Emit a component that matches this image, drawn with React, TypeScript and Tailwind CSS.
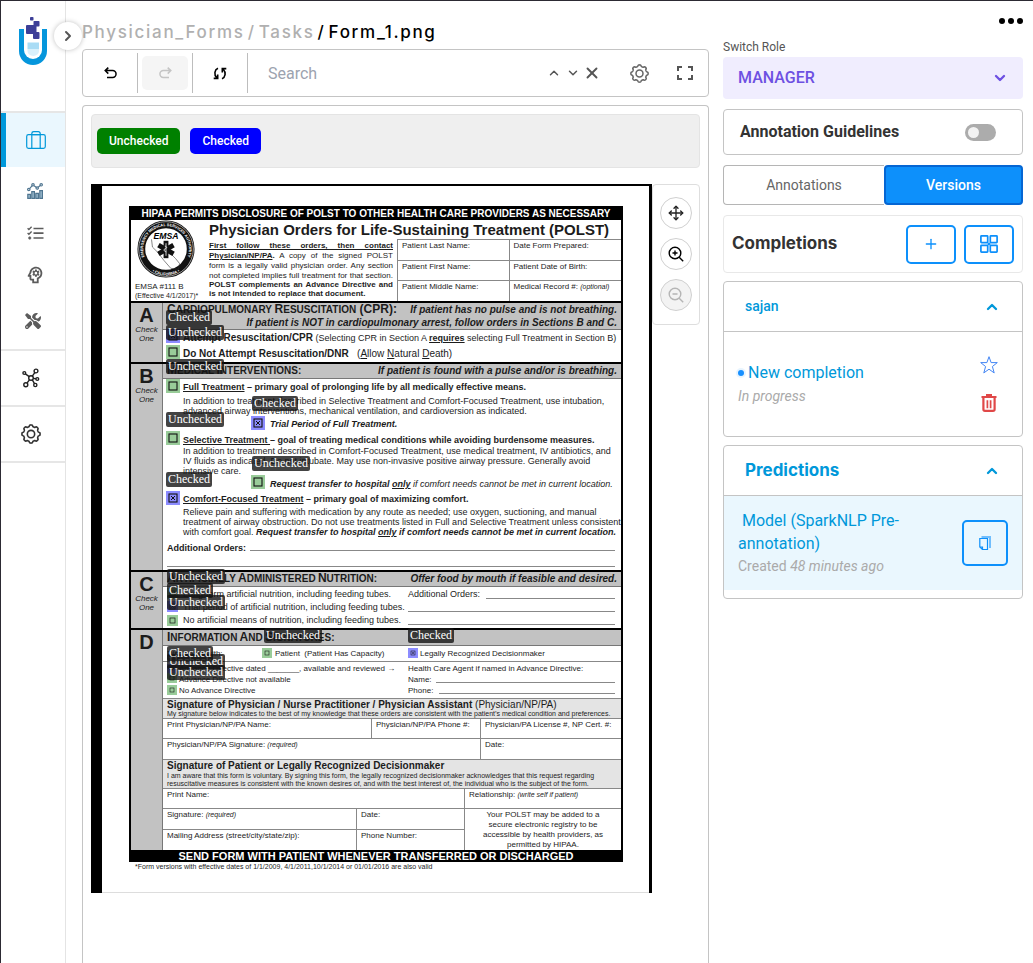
import type { ReactNode } from "react";
import { FaTools } from "react-icons/fa";
import { MdOutlinePsychology } from "react-icons/md";
import { ChevronDown, ChevronRight, ChevronUp, Move, Plus, X } from "lucide-react";

type Kind = "Checked" | "Unchecked";

/* ---------- icons ---------- */

function gearPath(teeth: number, outer: number, inner: number) {
  const points: string[] = [];
  const steps = teeth * 16;
  for (let i = 0; i < steps; i++) {
    const a = (i / steps) * Math.PI * 2;
    const wave = Math.tanh(2.2 * Math.cos(a * teeth)) / Math.tanh(2.2);
    const r = (outer + inner) / 2 + ((outer - inner) / 2) * wave;
    points.push(`${(12 + r * Math.sin(a)).toFixed(2)} ${(12 - r * Math.cos(a)).toFixed(2)}`);
  }
  return `M${points.join("L")}Z`;
}

function Gear({ className }: { className: string }) {
  return (
    <svg viewBox="0 0 24 24" className={className} fill="none" stroke="currentColor" strokeWidth="1.9" aria-hidden="true">
      <path d={gearPath(8, 10.9, 9)} />
      <circle cx="12" cy="12" r="4.4" />
    </svg>
  );
}

function Logo() {
  return (
    <svg viewBox="0 0 28 50" className="h-[50px] w-7" role="img" aria-label="Home">
      <path d="M0 13h5v17a9 9 0 0 0 18 0V13h5v22a14 14 0 0 1-28 0z" fill="#0596dc" />
      <path d="M5 25h18v9a9 9 0 0 1-18 0z" fill="#fff" />
      <path d="M8.500 26.500h11.500v6.500h-11.500z" fill="#a9dcf5" />
      <path d="M8.500 33h11.500v2a5.700 5 0 0 1-11.500 0z" fill="#d9f1fc" />
      <g fill="#3d3f98">
        <rect x="11" y="1" width="3.500" height="3.500" rx=".8" />
        <rect x="14.500" y="5" width="6" height="5.500" rx=".8" />
        <rect x="7" y="9" width="10.500" height="9" rx="1" />
        <rect x="14" y="16" width="6.500" height="7" rx="1" />
      </g>
    </svg>
  );
}

function SuitcaseIcon() {
  return (
    <svg viewBox="0 0 20 18" className="h-[18px] w-5" fill="none" stroke="currentColor" strokeWidth="1.2" aria-hidden="true">
      <rect x=".7" y="3.700" width="18.600" height="13.600" rx="1.800" />
      <path d="M5.800 17V2.500A1.800 1.800 0 0 1 7.600.7h4.800a1.800 1.800 0 0 1 1.800 1.800V17M5.800 3.700h8.400" />
    </svg>
  );
}

function ChartIcon() {
  return (
    <svg viewBox="0 0 16 16" className="size-4" fill="none" stroke="currentColor" strokeWidth="1.200" aria-hidden="true">
      <path d="M.8 15.400v-4h2.600v4zM4.800 15.400V8.600h2.600v6.800zM8.800 15.400v-5h2.600v5zM12.800 15.400V7.600h2.600v7.800z" fill="#9dbcd0" />
      <circle cx="1.800" cy="6.500" r="1.200" />
      <circle cx="6" cy="1.800" r="1.200" />
      <circle cx="10.200" cy="5" r="1.200" />
      <circle cx="14.200" cy="1.800" r="1.200" />
      <path d="m2.600 5.600 2.600-2.900m1.800 0 2.300 1.600m1.800-.1 2.200-1.600" />
    </svg>
  );
}

function ChecklistIcon() {
  return (
    <svg viewBox="0 0 17 14" className="h-3.5 w-[17px]" fill="none" stroke="currentColor" strokeWidth="1.700" aria-hidden="true">
      <path d="M6.500 2.500H16.500M6.500 7.200H16.500M6.500 12H16.500" />
      <path d="m.6 2.200 1.300 1.300L4.600.7M.6 7l1.300 1.300 2.700-2.800" strokeWidth="1.300" />
      <path d="M1.200 12h3M2.700 10.500v3" strokeWidth="1.600" />
    </svg>
  );
}

function NetworkIcon() {
  return (
    <svg viewBox="0 0 18 20" className="h-5 w-[18px]" fill="none" stroke="currentColor" strokeWidth="1.400" aria-hidden="true">
      <circle cx="9" cy="10" r="2.300" />
      <circle cx="2.300" cy="5" r="1.400" />
      <circle cx="14" cy="3" r="1.900" />
      <circle cx="15.300" cy="11" r="1.400" />
      <circle cx="3.800" cy="16.800" r="2" />
      <circle cx="13.300" cy="17" r="1.600" />
      <path d="M3.400 5.900 7.200 8.600M12.800 4.600l-2.500 3.500M11.300 10.400l2.600.4M5 15.200l2.400-3.400M12.500 15.600l-2.200-3.700" />
    </svg>
  );
}

function UndoIcon({ flipped = false }: { flipped?: boolean }) {
  return (
    <svg viewBox="0 0 13 12" className={flipped ? "h-3 w-[13px] -scale-x-100" : "h-3 w-[13px]"} fill="none" stroke="currentColor" strokeWidth="1.500" aria-hidden="true">
      <path d="M4.300.6 1.200 3.600l3.100 3M1.400 3.600h7.200a3.400 3.400 0 0 1 0 6.900H3" />
    </svg>
  );
}

function ResetIcon() {
  return (
    <svg viewBox="0 0 14 13" className="h-[13px] w-3.5" fill="none" stroke="currentColor" strokeWidth="1.600" aria-hidden="true">
      <path d="M5 1.200C1.600 2.600.6 7.500 3.800 10.800M.7 11.400h4V7.600M9 11.800c3.400-1.400 4.400-6.300 1.200-9.600M13.300 1.600h-4v3.800" />
    </svg>
  );
}

function FullscreenIcon() {
  return (
    <svg viewBox="0 0 16 14" className="h-3.5 w-4" fill="none" stroke="currentColor" strokeWidth="2" aria-hidden="true">
      <path d="M1 5V1h4M11 1h4v4M15 9v4h-4M5 13H1V9" />
    </svg>
  );
}

function ZoomIcon({ plus = false }: { plus?: boolean }) {
  return (
    <svg viewBox="0 0 16 16" className="size-4" fill="none" stroke="currentColor" strokeWidth="1.400" aria-hidden="true">
      <circle cx="7" cy="7" r="5.800" />
      <path d="m11.200 11.200 4 4M4.500 7h5" />
      {plus && <path d="M7 4.500v5" />}
    </svg>
  );
}

function GridIcon() {
  return (
    <svg viewBox="0 0 18 18" className="size-[18px]" fill="none" stroke="currentColor" strokeWidth="1.700" aria-hidden="true">
      <rect x=".9" y=".9" width="6.800" height="6.800" rx=".6" />
      <rect x="10.300" y=".9" width="6.800" height="6.800" rx=".6" />
      <rect x=".9" y="10.300" width="6.800" height="6.800" rx=".6" />
      <rect x="10.300" y="10.300" width="6.800" height="6.800" rx=".6" />
      <path d="m7.300 7.300 3.400 3.400m0-3.400-3.400 3.400" strokeWidth="1.200" />
    </svg>
  );
}

function StarIcon() {
  return (
    <svg viewBox="0 0 18 18" className="size-[18px]" fill="none" stroke="currentColor" strokeWidth="1" strokeLinejoin="round" aria-hidden="true">
      <path d="m9 .7 2.100 5.900h6.200l-4.900 3.900 1.800 6.400L9 13.200l-5.200 3.700 1.800-6.400L.7 6.600h6.200z" />
    </svg>
  );
}

function TrashIcon() {
  return (
    <svg viewBox="0 0 16 18" className="h-[18px] w-4" fill="none" stroke="currentColor" aria-hidden="true">
      <path d="M.5 3h15M5 1.200h6" strokeWidth="2.200" />
      <path d="M2.400 3.500v11.800a1.600 1.600 0 0 0 1.600 1.600h8a1.600 1.600 0 0 0 1.600-1.600V3.500" strokeWidth="2.200" />
      <path d="M6.400 6.200v8M9.600 6.200v8" strokeWidth="1.700" />
    </svg>
  );
}

function PagesIcon() {
  return (
    <svg viewBox="0 0 12 14" className="h-3.5 w-3" fill="none" stroke="currentColor" aria-hidden="true">
      <path d="M2.500 1h8.500v11" strokeWidth="2" strokeOpacity=".55" />
      <path d="M.8 2.500h7.700v11H3.500L.8 11zM.8 11h2.700v2.500" strokeWidth="1.200" />
    </svg>
  );
}

/* ---------- scanned form ---------- */

function Seal() {
  return (
    <svg viewBox="0 0 60 60" className="ml-0.5 size-[58px] overflow-visible" role="img" aria-label="EMSA seal">
      <defs>
        <path id="seal-top" d="M11.800 45.200A23.700 23.700 0 1 1 48.200 45.200" />
        <path id="seal-bottom" d="M6.400 43.600A27.200 27.200 0 0 0 53.600 43.600" />
      </defs>
      <circle cx="30" cy="30" r="25.500" fill="#fff" stroke="#111" strokeWidth="8" />
      <circle cx="30" cy="30" r="28.300" fill="none" stroke="#ddd" strokeWidth=".7" />
      <path d="M15 20l1 8 5 5 7 9 7 8 8 1 1-6-4-5-11-11v-7" fill="none" stroke="#333" strokeWidth=".6" />
      <g className="fill-white font-['Liberation_Sans'] text-[4px] font-bold">
        <text><textPath href="#seal-top" startOffset="50%" textAnchor="middle">EMERGENCY MEDICAL SERVICES AUTHORITY</textPath></text>
        <text><textPath href="#seal-bottom" startOffset="50%" textAnchor="middle">• CALIFORNIA •</textPath></text>
      </g>
      <text x="30" y="20" textAnchor="middle" className="fill-black font-['Liberation_Sans'] text-[9px] font-bold italic">EMSA</text>
      <g fill="#111">
        <rect x="27.500" y="21.500" width="5" height="18" />
        <rect x="27.500" y="21.500" width="5" height="18" transform="rotate(60 30 30.500)" />
        <rect x="27.500" y="21.500" width="5" height="18" transform="rotate(120 30 30.500)" />
      </g>
      <path d="M30 24v13M28.800 27c2.500.5 2.500 2 0 3s0 2.500 1.500 3" stroke="#fff" strokeWidth=".8" fill="none" />
    </svg>
  );
}

function Caps({ words, tail = "" }: { words: string[]; tail?: string }) {
  return (
    <span className="font-bold">
      {words.map((word, i) => (
        <span key={word}>
          {i > 0 && " "}
          <span className="text-[12px]">{word[0]}</span>
          <span className="text-[10px]">{word.slice(1)}</span>
        </span>
      ))}
      <span className="text-[12px]">{tail}</span>
    </span>
  );
}

function Section({ letter, check = false, children }: { letter: string; check?: boolean; children: ReactNode }) {
  return (
    <section className="flex border-t-2 border-black">
      <div className="w-8 shrink-0 border-r border-[#777] bg-[#c2c2c2] text-center">
        <div className="pt-0.5 text-[20px] leading-5 font-bold">{letter}</div>
        {check && <div className="text-[8px] leading-[9px] italic">Check<br />One</div>}
      </div>
      <div className="min-w-0 flex-1">{children}</div>
    </section>
  );
}

const bar = "flex items-center justify-between border-b border-[#777] bg-[#c2c2c2] px-1";
const field = "border-[#888] px-1 pt-px";

function Rule() {
  return <span className="mb-0.5 flex-1 self-end border-b border-[#888]" />;
}

function PolstForm() {
  return (
    <div className="w-[494px] font-['Liberation_Sans',Arial,sans-serif] text-[8px] leading-[10px] whitespace-nowrap text-[#1c1c1c]">
      <div className="border-x-2 border-black">
        <div className="h-[14px] bg-black text-center text-[10px] leading-[15px] font-bold text-white">
          HIPAA PERMITS DISCLOSURE OF POLST TO OTHER HEALTH CARE PROVIDERS AS NECESSARY
        </div>
        <div className="flex h-[81px]">
          <div className="flex w-[78px] shrink-0 flex-col pl-1">
            <Seal />
            <div className="mt-1 leading-[10px]">EMSA #111 B</div>
            <div className="text-[7px] leading-[7px]">(Effective 4/1/2017)*</div>
          </div>
          <div className="flex min-w-0 flex-1 flex-col">
            <h2 className="h-[19px] text-[15px] leading-5 font-bold">Physician Orders for Life-Sustaining Treatment (POLST)</h2>
            <div className="flex flex-1">
              <div className="w-[188px] shrink-0 pt-0.5 pr-1">
                <div className="font-bold underline [text-align-last:justify]">First follow these orders, then contact</div>
                <div className="[text-align-last:justify]"><b className="underline">Physician/NP/PA</b><b>.</b> A copy of the signed POLST</div>
                <div className="[text-align-last:justify]">form is a legally valid physician order. Any section</div>
                <div className="leading-[9px] [text-align-last:justify]">not completed implies full treatment for that section.</div>
                <div className="leading-[9px] font-bold [text-align-last:justify]">POLST complements an Advance Directive and</div>
                <div className="leading-[9px] font-bold">is not intended to replace that document.</div>
              </div>
              <div className="grid flex-1 grid-cols-2 grid-rows-3 border-l border-[#888]">
                {["Patient Last Name:", "Date Form Prepared:", "Patient First Name:", "Patient Date of Birth:", "Patient Middle Name:"].map((name) => (
                  <div key={name} className="border-t border-[#888] px-1 pt-px odd:border-r">{name}</div>
                ))}
                <div className="border-t border-[#888] px-1 pt-px">Medical Record #: <i className="text-[7px]">(optional)</i></div>
              </div>
            </div>
          </div>
        </div>

        <Section letter="A" check>
          <div className="h-[27px] border-b border-[#777] bg-[#c2c2c2] px-1 text-right text-[10px] leading-[13px] font-bold italic">
            <div className="flex items-baseline justify-between">
              <span className="not-italic"><Caps words={["CARDIOPULMONARY", "RESUSCITATION"]} tail=" (CPR):" /></span>
              <span>If patient has no pulse and is not breathing.</span>
            </div>
            <div>If patient is NOT in cardiopulmonary arrest, follow orders in Sections B and C.</div>
          </div>
          <div className="h-8 pl-5 text-[9px] leading-[16px]">
            <div><b className="text-[10px]">Attempt Resuscitation/CPR</b> (Selecting CPR in Section A <b className="underline">requires</b> selecting Full Treatment in Section B)</div>
            <div className="text-[10px]"><b>Do Not Attempt Resuscitation/DNR</b> &nbsp; (<u>A</u>llow <u>N</u>atural <u>D</u>eath)</div>
          </div>
        </Section>

        <Section letter="B" check>
          <div className={`${bar} h-[15px]`}>
            <Caps words={["MEDICAL", "INTERVENTIONS:"]} />
            <b className="text-[10px] italic">If patient is found with a pulse and/or is breathing.</b>
          </div>
          <div className="h-[191px] pl-5 text-[9px]">
            <div className="pt-px leading-[14px] font-bold"><u>Full Treatment</u> – primary goal of prolonging life by all medically effective means.</div>
            <div className="pt-0.5">In addition to treatment described in Selective Treatment and Comfort-Focused Treatment, use intubation,<br />advanced airway interventions, mechanical ventilation, and cardioversion as indicated.</div>
            <div className="pl-[87px] leading-[16px] font-bold italic">Trial Period of Full Treatment.</div>
            <div className="pt-[3px] font-bold"><u>Selective Treatment </u>– goal of treating medical conditions while avoiding burdensome measures.</div>
            <div className="pt-px">In addition to treatment described in Comfort-Focused Treatment, use medical treatment, IV antibiotics, and<br />IV fluids as indicated. Do not intubate. May use non-invasive positive airway pressure. Generally avoid<br />intensive care.</div>
            <div className="pl-[87px] leading-[16px] italic"><b>Request transfer to hospital <u>only</u></b> if comfort needs cannot be met in current location.</div>
            <div className="leading-[15px] font-bold"><u>Comfort-Focused Treatment</u> – primary goal of maximizing comfort.</div>
            <div>Relieve pain and suffering with medication by any route as needed; use oxygen, suctioning, and manual<br />treatment of airway obstruction. Do not use treatments listed in Full and Selective Treatment unless consistent<br />with comfort goal. <b className="italic">Request transfer to hospital <u>only</u> if comfort needs cannot be met in current location.</b></div>
            <div className="-ml-4 mr-1.5">
              <div className="flex gap-1 pt-1.5"><b>Additional Orders:</b><Rule /></div>
              <div className="flex h-4"><Rule /></div>
            </div>
          </div>
        </Section>

        <Section letter="C" check>
          <div className={`${bar} h-[15px]`}>
            <Caps words={["ARTIFICIALLY", "ADMINISTERED", "NUTRITION:"]} />
            <b className="text-[10px] italic">Offer food by mouth if feasible and desired.</b>
          </div>
          <div className="flex h-[41px] pt-px pr-1.5 pl-5 text-[9px] leading-[13px]">
            <div className="w-[225px] shrink-0">
              <div>Long-term artificial nutrition, including feeding tubes.</div>
              <div>Trial period of artificial nutrition, including feeding tubes.</div>
              <div>No artificial means of nutrition, including feeding tubes.</div>
            </div>
            <div className="flex-1">
              <div className="flex gap-1.5">Additional Orders:<Rule /></div>
              <div className="flex h-[13px]"><Rule /></div>
              <div className="flex h-[13px]"><Rule /></div>
            </div>
          </div>
        </Section>

        <Section letter="D">
          <div className={`${bar} h-4`}>
            <Caps words={["INFORMATION", "AND", "SIGNATURES:"]} />
          </div>
          <div className="flex h-4 border-b border-[#888] pl-1 leading-[16px]">
            <span className="w-[108px]">Discussed with:</span>
            <span className="w-[145px]">Patient &nbsp;(Patient Has Capacity)</span>
            <span>Legally Recognized Decisionmaker</span>
          </div>
          <div className="flex h-9 pt-px pr-1.5 pl-4 leading-[11px]">
            <div className="w-[229px] shrink-0">
              <div>Advance Directive dated _______, available and reviewed →</div>
              <div>Advance Directive not available</div>
              <div>No Advance Directive</div>
            </div>
            <div className="flex-1">
              <div>Health Care Agent if named in Advance Directive:</div>
              <div className="flex gap-1">Name:<Rule /></div>
              <div className="flex gap-1.5">Phone:<Rule /></div>
            </div>
          </div>
          <div className="h-[21px] border-y border-[#888] bg-[#e4e4e4] px-1">
            <div className="text-[10px] leading-[11px]"><b>Signature of Physician / Nurse Practitioner / Physician Assistant</b> (Physician/NP/PA)</div>
            <div className="text-[7px] leading-[8px]">My signature below indicates to the best of my knowledge that these orders are consistent with the patient’s medical condition and preferences.</div>
          </div>
          <div className="flex h-5 border-b border-[#888]">
            <div className={`${field} w-[209px] border-r`}>Print Physician/NP/PA Name:</div>
            <div className={`${field} w-[109px] border-r`}>Physician/NP/PA Phone #:</div>
            <div className={`${field} flex-1`}>Physician/PA License #, NP Cert. #:</div>
          </div>
          <div className="flex h-5">
            <div className={`${field} w-[318px] border-r`}>Physician/NP/PA Signature: <i className="text-[7px]">(required)</i></div>
            <div className={`${field} flex-1`}>Date:</div>
          </div>
          <div className="h-[30px] border-y border-[#888] bg-[#e4e4e4] px-1">
            <div className="text-[10px] leading-[12px] font-bold">Signature of Patient or Legally Recognized Decisionmaker</div>
            <div className="text-[7px] leading-[8px]">I am aware that this form is voluntary. By signing this form, the legally recognized decisionmaker acknowledges that this request regarding<br />resuscitative measures is consistent with the known desires of, and with the best interest of, the individual who is the subject of the form.</div>
          </div>
          <div className="flex h-[61px]">
            <div className="flex w-[302px] flex-col border-r border-[#888]">
              <div className={`${field} h-5 border-b`}>Print Name:</div>
              <div className="grid flex-1 grid-cols-[194px_1fr] grid-rows-2">
                <div className={`${field} border-r border-b`}>Signature: <i className="text-[7px]">(required)</i></div>
                <div className={`${field} border-b`}>Date:</div>
                <div className={`${field} border-r`}>Mailing Address (street/city/state/zip):</div>
                <div className={field}>Phone Number:</div>
              </div>
            </div>
            <div className="flex-1">
              <div className={`${field} h-5 border-b`}>Relationship: <i className="text-[7px]">(write self if patient)</i></div>
              <div className="pt-px text-center">Your POLST may be added to a<br />secure electronic registry to be<br />accessible by health providers, as<br />permitted by HIPAA.</div>
            </div>
          </div>
        </Section>
      </div>
      <div className="h-3 bg-black text-center text-[11px] leading-3 font-bold text-white">SEND FORM WITH PATIENT WHENEVER TRANSFERRED OR DISCHARGED</div>
      <div className="pl-1.5 text-[7px] leading-[9px]">*Form versions with effective dates of 1/1/2009, 4/1/2011,10/1/2014 or 01/01/2016 are also valid</div>
    </div>
  );
}

/* Regions are stored in canvas pixels: box x, y, side, then the label's x, y. */
const regions: { kind: Kind; x: number; y: number; size: number; lx: number; ly: number }[] = [
  { kind: "Checked", x: 75, y: 145, size: 14, lx: 75, ly: 126 },
  { kind: "Unchecked", x: 75, y: 161, size: 14, lx: 75, ly: 141 },
  { kind: "Unchecked", x: 75, y: 195, size: 14, lx: 75, ly: 175 },
  { kind: "Checked", x: 160, y: 232, size: 14, lx: 161, ly: 212 },
  { kind: "Unchecked", x: 75, y: 247, size: 14, lx: 75, ly: 228 },
  { kind: "Unchecked", x: 160, y: 291, size: 14, lx: 161, ly: 272 },
  { kind: "Checked", x: 75, y: 307, size: 14, lx: 75, ly: 288 },
  { kind: "Unchecked", x: 76, y: 404, size: 11, lx: 76, ly: 385 },
  { kind: "Checked", x: 76, y: 417, size: 11, lx: 76, ly: 399 },
  { kind: "Unchecked", x: 76, y: 431, size: 11, lx: 76, ly: 411 },
  { kind: "Unchecked", x: 171, y: 464, size: 10, lx: 173, ly: 444 },
  { kind: "Checked", x: 317, y: 464, size: 10, lx: 317, ly: 444 },
  { kind: "Unchecked", x: 76, y: 489, size: 10, lx: 76, ly: 470 },
  { kind: "Checked", x: 76, y: 480, size: 9, lx: 76, ly: 462 },
  { kind: "Unchecked", x: 76, y: 501, size: 10, lx: 76, ly: 481 },
];

function Regions() {
  return (
    <>
      {regions.map((r) => (
        <span
          key={`box-${r.x}-${r.y}`}
          className={`absolute flex p-[3px] ${r.kind === "Checked" ? "bg-[#0000ff]/45" : "bg-[#008000]/40"}`}
          style={{ left: r.x, top: r.y, width: r.size, height: r.size }}
        >
          <svg viewBox="0 0 8 8" className="size-full overflow-visible" fill="none" stroke="#111" strokeWidth="1.100" aria-hidden="true">
            <rect x="0" y="0" width="8" height="8" />
            {r.kind === "Checked" && <path d="m2 2 4 4m0-4L2 6" strokeWidth="1" />}
          </svg>
        </span>
      ))}
      {regions.map((r) => (
        <span
          key={`label-${r.lx}-${r.ly}`}
          className="absolute rounded-xs bg-[#141414]/80 px-0.5 font-['Liberation_Serif',serif] text-[12px] leading-[15px] text-white"
          style={{ left: r.lx, top: r.ly }}
        >
          {r.kind}
        </span>
      ))}
    </>
  );
}

/* ---------- page parts ---------- */

const navItem = "flex h-[42px] items-center justify-center";

function Sidebar() {
  return (
    <nav aria-label="Main" className="relative w-[65px] shrink-0 border-r border-[#e4e4e4]">
      <div className="flex h-28 justify-center border-b-2 border-[#e6e6e6] pt-[15px]">
        <a href="#home" className="h-[50px]"><Logo /></a>
      </div>
      <button type="button" aria-label="Expand menu" className="absolute top-[21px] left-[53px] z-10 flex size-7 items-center justify-center rounded-full bg-white text-[#555] shadow-[0_0_5px_rgba(0,0,0,0.25)]">
        <ChevronRight className="size-4" strokeWidth={3} />
      </button>
      <a href="#projects" aria-label="Projects" className="flex h-[54px] items-center justify-center border-l-[5px] border-[#0098da] bg-[#eaf7fe] text-[#0098da]"><SuitcaseIcon /></a>
      <div className="border-b-2 border-[#e6e6e6] pt-[3px] pb-1.5 pl-1 text-[#5c5c5c]">
        <a href="#analytics" aria-label="Analytics" className={`${navItem} text-[#4f7590]`}><ChartIcon /></a>
        <a href="#tasks" aria-label="Tasks" className={navItem}><ChecklistIcon /></a>
        <a href="#models" aria-label="Models" className={navItem}><MdOutlinePsychology className="size-[22px]" /></a>
        <a href="#tools" aria-label="Tools" className="flex h-[47px] items-center justify-center pt-0.5 pr-1"><FaTools className="size-4" /></a>
      </div>
      <a href="#hub" aria-label="Hub" className="flex h-14 items-center justify-center border-b-2 border-[#e6e6e6] pr-1 text-[#222]"><NetworkIcon /></a>
      <a href="#settings" aria-label="Settings" className="flex h-14 items-center justify-center border-b-2 border-[#e6e6e6] pr-1 text-[#333]"><Gear className="size-5" /></a>
    </nav>
  );
}

const tool = "flex h-10 w-[55px] shrink-0 items-center justify-center border-r border-[#bdbdbd]";

function Toolbar() {
  return (
    <div className="flex h-12 items-center rounded-[4px] border border-[#c4c4c4]">
      <button type="button" aria-label="Undo" className={`${tool} text-black`}><UndoIcon /></button>
      <div className={tool}>
        <button type="button" disabled aria-label="Redo" className="flex h-[34px] w-[46px] items-center justify-center rounded-[5px] bg-[#f5f5f5] text-[#c4c4c4]"><UndoIcon flipped /></button>
      </div>
      <button type="button" aria-label="Reset" className={`${tool} text-black`}><ResetIcon /></button>
      <input type="text" aria-label="Search" placeholder="Search" className="h-10 min-w-0 flex-1 px-5 text-[16px] outline-none placeholder:text-[#9ca3af]" />
      <div className="flex items-center text-[#555]">
        <button type="button" aria-label="Previous match" className="flex w-[19px] justify-center"><ChevronUp className="size-3.5" strokeWidth={2.5} /></button>
        <button type="button" aria-label="Next match" className="flex w-[19px] justify-center"><ChevronDown className="size-3.5" strokeWidth={2.5} /></button>
        <button type="button" aria-label="Clear search" className="flex w-[19px] justify-center"><X className="size-[18px]" strokeWidth={2.5} /></button>
        <button type="button" aria-label="Display settings" className="ml-7 flex w-5 justify-center text-[#666]"><Gear className="size-[19px]" /></button>
        <button type="button" aria-label="Full screen" className="mr-[15px] ml-7 flex w-4 justify-center"><FullscreenIcon /></button>
      </div>
    </div>
  );
}

const round = "flex size-8 items-center justify-center rounded-full border border-[#d0d0d0]";

function Workspace() {
  return (
    <div className="flex-1 rounded-t-[4px] border border-b-0 border-[#c4c4c4] p-2">
      <div className="flex h-[54px] items-center gap-2.5 rounded-[4px] border border-[#e4e4e4] bg-[#efefef] px-[5px]">
        <button type="button" className="h-[26px] rounded-[5px] bg-[#008000] px-3 text-[12px] font-medium text-white">Unchecked</button>
        <button type="button" className="h-[26px] rounded-[5px] bg-[#0000ff] px-3 text-[12px] font-medium text-white">Checked</button>
      </div>
      <div className="mt-4 flex items-start">
        <div className="relative w-[561px] shrink-0 border-t-2 border-r-[3px] border-l-[11px] border-black bg-white">
          <div className="h-[707px] border-b border-[#ddd] pt-5 pl-[27px]"><PolstForm /></div>
          <div className="absolute -top-0.5 -left-[11px]"><Regions /></div>
        </div>
        <div className="flex h-[141px] flex-1 flex-col items-center gap-[9px] rounded-[4px] border border-[#dedede] pt-3">
          <button type="button" aria-label="Pan" className={`${round} text-[#222]`}><Move className="size-4" strokeWidth={2} /></button>
          <button type="button" aria-label="Zoom in" className={`${round} text-black`}><ZoomIcon plus /></button>
          <button type="button" disabled aria-label="Zoom out" className={`${round} bg-[#f3f3f3] text-[#b5b5b5]`}><ZoomIcon /></button>
        </div>
      </div>
    </div>
  );
}

const outlineButton = "flex h-[39px] w-[50px] items-center justify-center rounded-[5px] border-2 border-[#0d90fb] text-[#0d90fb]";

function SidePanel() {
  return (
    <aside className="w-[300px] shrink-0">
      <div className="flex h-10 items-center justify-end">
        <button type="button" aria-label="More options" className="flex gap-[3px] text-black">
          <span className="size-1.5 rounded-full bg-black" />
          <span className="size-1.5 rounded-full bg-black" />
          <span className="size-1.5 rounded-full bg-black" />
        </button>
      </div>
      <label htmlFor="role" className="block h-4 text-[12px] leading-3 text-[#555]">Switch Role</label>
      <div className="relative">
        <select id="role" className="h-[42px] w-full appearance-none rounded-[4px] bg-[#f0edfe] px-[15px] text-[16px] font-medium text-[#6d50e2] outline-none">
          <option>MANAGER</option>
        </select>
        <ChevronDown className="pointer-events-none absolute top-[13px] right-[15px] size-4 text-[#6d50e2]" strokeWidth={3.5} />
      </div>
      <label className="mt-2.5 flex h-[46px] items-center justify-between rounded-[4px] border border-[#c4c4c4] pr-[26px] pl-4 text-[16px] font-bold text-[#333]">
        Annotation Guidelines
        <input type="checkbox" role="switch" className="h-[17px] w-[31px] appearance-none rounded-full bg-[#acacac] p-[3px] before:block before:size-[11px] before:rounded-full before:bg-[#f3f3f3] checked:before:ml-auto" />
      </label>
      <div className="mt-2.5 flex h-10 text-[14px]">
        <button type="button" className="w-[161px] rounded-l-[4px] border border-r-0 border-[#b5b5b5] text-[#666]">Annotations</button>
        <button type="button" className="flex-1 rounded-[4px] border-2 border-[#0566d3] bg-[#0d90fb] font-medium text-white">Versions</button>
      </div>
      <div className="mt-2.5 flex h-[58px] items-center gap-2 rounded-[4px] border border-[#e8e8e8] px-2">
        <h2 className="flex-1 font-['Inter',sans-serif] text-[17px] font-bold text-[#333]">Completions</h2>
        <button type="button" aria-label="Add completion" className={outlineButton}><Plus className="size-4" strokeWidth={2} /></button>
        <button type="button" aria-label="Compare completions" className={outlineButton}><GridIcon /></button>
      </div>

      <div className="mt-2 rounded-[4px] border border-[#c4c4c4]">
        <button type="button" className="flex h-[50px] w-full items-center justify-between border-b border-[#c4c4c4] pr-[22px] pl-[21px] text-[14px] font-medium text-[#0098da]">
          sajan
          <ChevronUp className="size-4" strokeWidth={3.5} />
        </button>
        <div className="flex h-[104px] items-center justify-between pr-6 pl-3.5">
          <div>
            <div className="flex items-center gap-1 text-[16px] leading-6 text-[#0098da]">
              <span className="size-1.5 rounded-full bg-[#1890ff] ring-2 ring-[#1890ff]/10" />New completion
            </div>
            <div className="text-[14px] leading-[22px] text-[#aaa] italic">In progress</div>
          </div>
          <div className="flex flex-col items-center gap-5">
            <button type="button" aria-label="Mark as ground truth" className="text-[#4285f4]"><StarIcon /></button>
            <button type="button" aria-label="Delete completion" className="text-[#e04848]"><TrashIcon /></button>
          </div>
        </div>
      </div>

      <div className="mt-2 rounded-[4px] border border-[#c4c4c4] pb-2">
        <button type="button" className="flex h-[50px] w-full items-center justify-between border-b border-[#c4c4c4] pr-[22px] pl-[21px] text-[#0098da]">
          <span className="font-['Inter',sans-serif] text-[17px] font-bold">Predictions</span>
          <ChevronUp className="size-4" strokeWidth={3.5} />
        </button>
        <div className="flex h-[94px] items-center justify-between bg-[#eaf7fe] pr-3.5 pl-3.5">
          <div>
            <div className="w-[180px] text-[16px] leading-[23px] text-[#0098da]">&nbsp;Model (SparkNLP Pre-annotation)</div>
            <div className="text-[14px] leading-[22px] text-[#aaa]">Created <i>48 minutes ago</i></div>
          </div>
          <button type="button" aria-label="Copy prediction" className="flex size-[46px] items-center justify-center rounded-[5px] border-2 border-[#0d90fb] text-[#0d90fb]"><PagesIcon /></button>
        </div>
      </div>
    </aside>
  );
}

export default function App() {
  return (
    <div className="flex min-h-screen border-t border-l border-[#2c2a33] bg-white pr-2.5 font-['Roboto',sans-serif]">
      <Sidebar />
      <main className="ml-4 flex min-w-0 flex-1 flex-col">
        <nav aria-label="Breadcrumb" className="flex h-12 items-center gap-[3px] pt-3.5 font-['Inter',sans-serif] text-[17px] leading-6 font-medium tracking-widest text-[#b0b0b0]">
          <a href="#project">Physician_Forms</a>
          <span>/</span>
          <a href="#tasks">Tasks</a>
          <span className="text-black">/</span>
          <span className="text-black">Form_1.png</span>
        </nav>
        <Toolbar />
        <div className="h-2 shrink-0" />
        <Workspace />
      </main>
      <div className="w-3.5 shrink-0" />
      <SidePanel />
    </div>
  );
}
